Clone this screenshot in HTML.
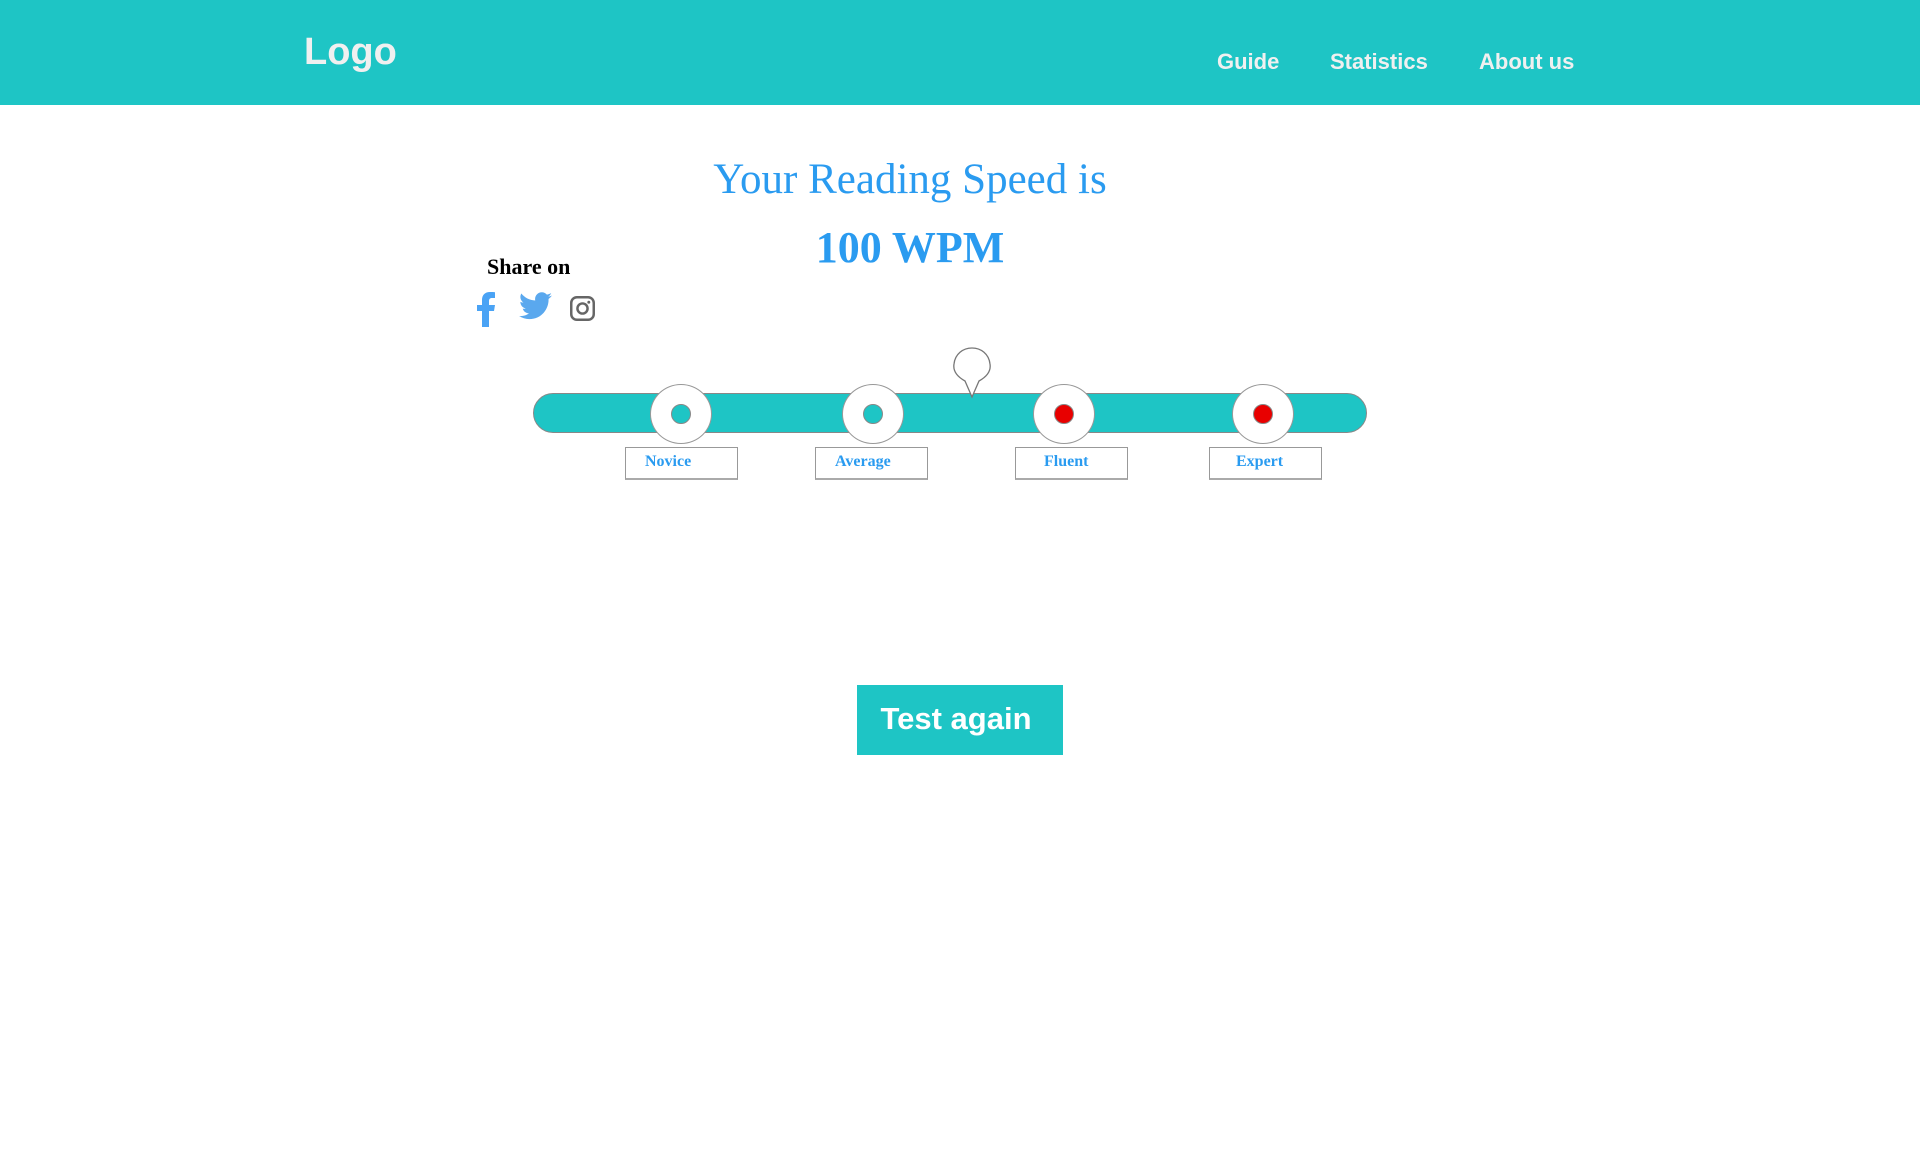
<!DOCTYPE html>
<html><head><style>
body{margin:0;width:1920px;height:1157px;background:#fff;position:relative;overflow:hidden;font-family:"Liberation Sans",sans-serif}
.hdr{position:absolute;left:0;top:0;width:1920px;height:105px;background:#1ec5c5}
.logo{position:absolute;left:304px;top:31px;font-size:38px;font-weight:bold;color:#f0f0f0}
.nav{position:absolute;top:49px;font-size:22px;font-weight:bold;color:#f0f0f0}
.serif{font-family:"Liberation Serif",serif}
.t1{position:absolute;left:0;width:1820px;text-align:center;top:155px;font-size:43px;color:#2a9bf0}
.t2{position:absolute;left:0;width:1820px;text-align:center;top:222px;font-size:44px;font-weight:bold;color:#2a9bf0}
.share{position:absolute;left:487px;top:254px;font-size:22px;font-weight:bold;color:#000}
.bar{position:absolute;left:533px;top:393px;width:832px;height:38px;background:#1ec5c5;border:1px solid #888;border-radius:20px}
.c{position:absolute;width:60px;height:58px;border-radius:50%;background:#fff;border:1px solid #999;top:384px}
.c i{position:absolute;left:20px;top:19px;width:20px;height:20px;border-radius:50%;border:1px solid #888;box-sizing:border-box}
.lb{position:absolute;top:447px;height:33px;width:113px;border:1px solid #999;border-bottom:2px solid #aaa;box-sizing:border-box;font-size:16px;font-weight:bold;color:#2a9bf0;padding-top:5px}
.btn{position:absolute;left:857px;top:685px;width:206px;height:70px;background:#1ec5c5;color:#fff;font-size:31px;font-weight:bold;text-align:center;line-height:68px;text-indent:-8px}
</style></head><body>
<div class="hdr">
<div class="logo">Logo</div>
<div class="nav" style="left:1217px">Guide</div>
<div class="nav" style="left:1330px">Statistics</div>
<div class="nav" style="left:1479px">About us</div>
</div>
<div class="t1 serif">Your Reading Speed is</div>
<div class="t2 serif">100 WPM</div>
<div class="share serif">Share on</div>
<svg style="position:absolute;left:476px;top:292px" width="20" height="35" viewBox="0 0 20 35"><path d="M6 35V19H1v-6h5V8c0-5 3-8 8-8 2 0 4 0 5 .3V6h-3c-2 0-3 1-3 3v4h6l-1 6h-5v16z" fill="#4aa3f5"/></svg>
<svg style="position:absolute;left:519px;top:292px" width="33" height="28" viewBox="0 0 24 20"><path d="M24 2.4c-.9.4-1.8.7-2.8.8 1-.6 1.800-1.600 2.200-2.700-1 .6-2 1-3.100 1.200C19.300.7 18 0 16.600 0c-2.700 0-4.900 2.200-4.900 4.900 0 .4 0 .8.1 1.100C7.700 5.800 4.100 3.900 1.700.9c-.4.7-.7 1.600-.7 2.500 0 1.700.9 3.200 2.200 4.100-.8 0-1.600-.2-2.200-.6v.1c0 2.400 1.700 4.400 3.900 4.800-.4.1-.8.2-1.300.2-.3 0-.6 0-.9-.1.6 2 2.400 3.400 4.600 3.400-1.700 1.300-3.800 2.100-6.100 2.100-.4 0-.8 0-1.200-.1 2.200 1.400 4.800 2.200 7.500 2.200 9.100 0 14-7.500 14-14v-.6c1-.7 1.800-1.600 2.500-2.500z" fill="#5aa8ee"/></svg>
<svg style="position:absolute;left:569px;top:295px" width="27" height="27" viewBox="0 0 24 24"><rect x="2" y="2" width="20" height="20" rx="5" fill="none" stroke="#666" stroke-width="2.2"/><circle cx="12" cy="12" r="4.5" fill="none" stroke="#666" stroke-width="2.2"/><circle cx="17.6" cy="6.4" r="1.3" fill="#666"/></svg>
<div class="bar"></div>
<div class="c" style="left:650px"><i style="background:#1ec5c5"></i></div>
<div class="c" style="left:842px"><i style="background:#1ec5c5"></i></div>
<div class="c" style="left:1033px"><i style="background:#e80000"></i></div>
<div class="c" style="left:1232px"><i style="background:#e80000"></i></div>
<svg style="position:absolute;left:952px;top:346px" width="40" height="54" viewBox="0 0 40 54"><path d="M20 51 L13 35 C4 30 1 24 2 18 C3 8 11 2 20 2 C29 2 37 8 38 18 C39 24 36 30 27 35 Z" fill="#fff" stroke="#777" stroke-width="1.3"/></svg>
<div class="lb serif" style="left:625px;padding-left:19px">Novice</div>
<div class="lb serif" style="left:815px;padding-left:19px">Average</div>
<div class="lb serif" style="left:1015px;padding-left:28px">Fluent</div>
<div class="lb serif" style="left:1209px;padding-left:26px">Expert</div>
<div class="btn">Test again</div>
</body></html>
